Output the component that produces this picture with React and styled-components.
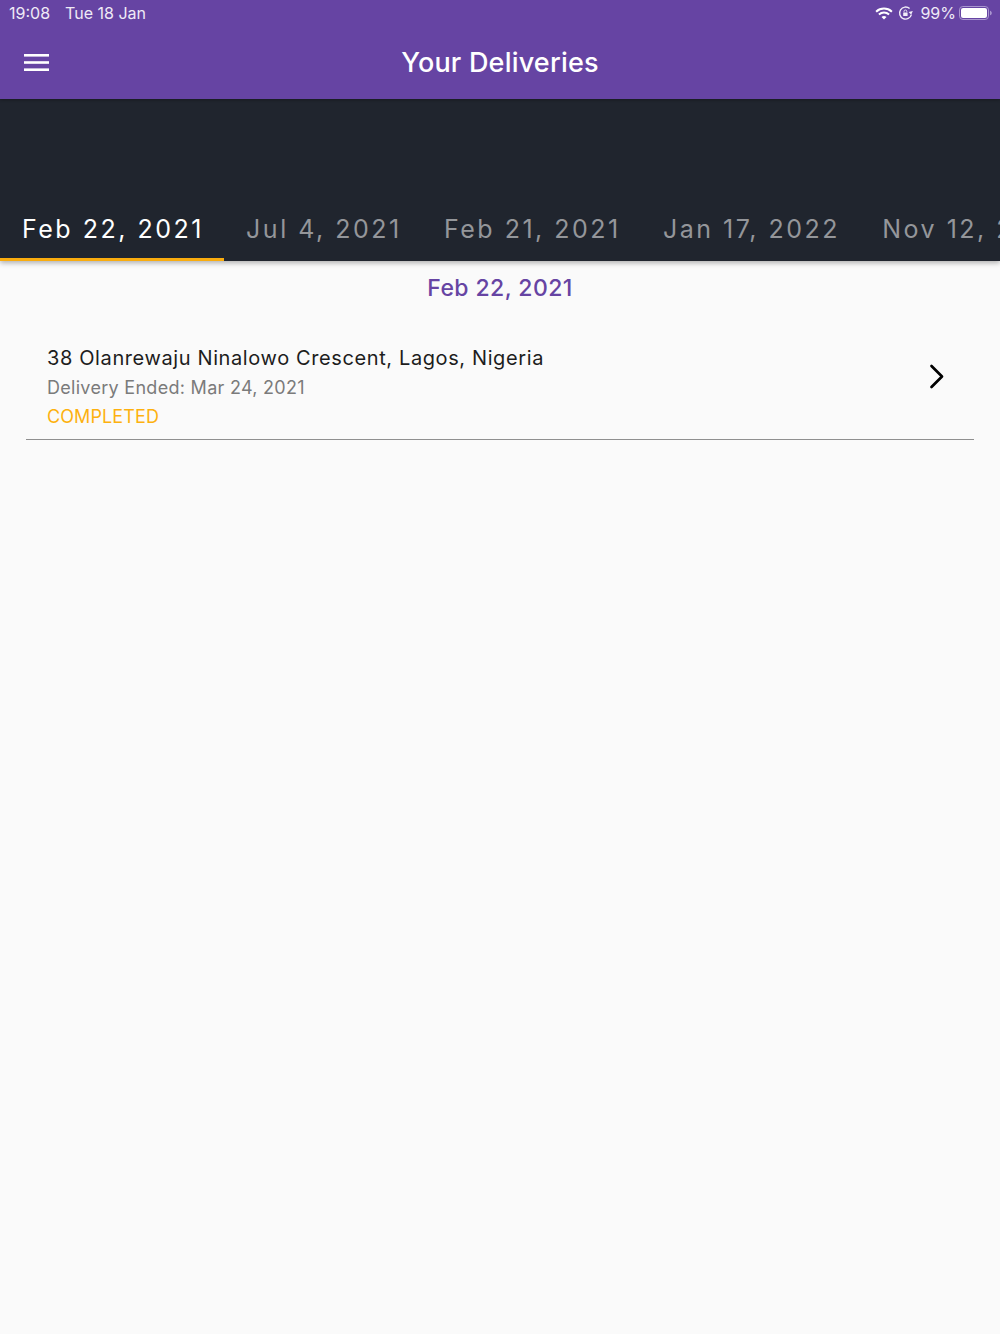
import styled, { createGlobalStyle } from "styled-components";

const GlobalStyle = createGlobalStyle`
  html, body {
    margin: 0;
    padding: 0;
    background: #fafafa;
  }
  * {
    box-sizing: border-box;
  }
`;

const Page = styled.div`
  width: 1000px;
  height: 1334px;
  overflow: hidden;
  background: #fafafa;
  font-family: Inter, "Liberation Sans", sans-serif;
  display: flex;
  flex-direction: column;
`;

const Header = styled.header`
  height: 99px;
  flex: none;
  background: #6644a3;
  display: flex;
  flex-direction: column;
  color: #fff;
  box-shadow: 0 1px 3px rgba(0, 0, 0, 0.3);
  position: relative;
  z-index: 2;
`;

const StatusBar = styled.div`
  height: 26px;
  padding: 0 7px 0 9px;
  display: flex;
  align-items: center;
  justify-content: space-between;
  font-size: 16px;
  color: #efeaf6;
`;

const StatusLeft = styled.div`
  display: flex;
  gap: 15px;
`;

const StatusRight = styled.div`
  display: flex;
  align-items: center;
`;

const Percent = styled.span`
  margin: 0 3px 0 7px;
`;

const Toolbar = styled.div`
  flex: 1;
  padding: 0 24px;
  display: grid;
  grid-template-columns: 1fr auto 1fr;
  align-items: center;
`;

const Title = styled.h1`
  margin: 0;
  font-size: 27px;
  font-weight: 500;
  letter-spacing: 0.2px;
`;

const TabPanel = styled.nav`
  height: 162px;
  flex: none;
  background: #20252e;
  display: flex;
  align-items: flex-end;
  overflow: hidden;
  box-shadow: 0 2px 5px rgba(0, 0, 0, 0.3);
  position: relative;
  z-index: 1;
`;

const Tab = styled.div`
  flex: none;
  height: 62px;
  padding: 0 20.25px 0 22px;
  display: flex;
  align-items: center;
  white-space: nowrap;
  font-size: 25px;
  letter-spacing: 2.5px;
  color: ${(p) => (p.$active ? "#ffffff" : "#94969a")};
  border-bottom: 3px solid ${(p) => (p.$active ? "#f9ac0e" : "transparent")};
`;

const DateHeading = styled.h2`
  margin: 0;
  padding-top: 13px;
  text-align: center;
  font-size: 23px;
  line-height: 28px;
  font-weight: 500;
  letter-spacing: 0.4px;
  color: #6644a3;
`;

const DeliveryRow = styled.div`
  margin: 27px 26px 0;
  padding: 15px 30px 0 21px;
  height: 111px;
  display: flex;
  align-items: flex-start;
  justify-content: space-between;
  border-bottom: 1px solid #8f8f8f;
`;

const DeliveryText = styled.div`
  display: flex;
  flex-direction: column;
`;

const Address = styled.div`
  font-size: 20px;
  line-height: 28px;
  letter-spacing: 0.61px;
  color: #1d1d1d;
`;

const Ended = styled.div`
  margin-top: 1px;
  font-size: 18px;
  line-height: 30px;
  letter-spacing: 0.29px;
  color: #7b7b7b;
`;

const Status = styled.div`
  font-size: 18px;
  line-height: 28px;
  letter-spacing: 0.1px;
  color: #fdb10f;
`;

const ChevronBox = styled.div`
  margin-top: 20px;
  display: flex;
`;

const tabs = ["Feb 22, 2021", "Jul 4, 2021", "Feb 21, 2021", "Jan 17, 2022", "Nov 12, 2021"];

function MenuIcon() {
  return (
    <svg width="25" height="18" viewBox="0 0 25 18" fill="#fff">
      <rect x="0" y="0" width="25" height="2.6" />
      <rect x="0" y="7.2" width="25" height="2.6" />
      <rect x="0" y="14.4" width="25" height="2.6" />
    </svg>
  );
}

function WifiIcon() {
  return (
    <svg width="18" height="13" viewBox="0 0 19 14" fill="none" stroke="#fff" strokeWidth="2.2">
      <path d="M1 5 C6 0.6 13 0.6 18 5" />
      <path d="M4 8 C7.2 5.4 11.8 5.4 15 8" />
      <path d="M9.5 13.5 L6.8 10.7 C8.4 9.5 10.6 9.5 12.2 10.7 Z" fill="#fff" stroke="none" />
    </svg>
  );
}

function RotationLockIcon() {
  return (
    <svg width="15" height="15" viewBox="0 0 15 15" fill="none" style={{ marginLeft: 5 }}>
      <path d="M11.6 2.6 A6 6 0 1 0 13.4 8.6" stroke="#f2eef8" strokeWidth="1.4" />
      <path d="M14.8 5 L13.2 8.8 L10.6 6 Z" fill="#f2eef8" />
      <rect x="5.2" y="6.4" width="4.4" height="3.6" rx="0.6" fill="#f2eef8" />
      <path d="M6 6.4 V5.4 A1.4 1.4 0 0 1 8.8 5.4 V6.4" stroke="#f2eef8" strokeWidth="0.9" />
    </svg>
  );
}

function BatteryIcon() {
  return (
    <svg width="34" height="14" viewBox="0 0 34 14" fill="none">
      <rect x="0.5" y="0.5" width="29" height="13" rx="3.4" stroke="#a995cf" />
      <rect x="2" y="2" width="26" height="10" rx="2.1" fill="#fff" />
      <path d="M31 4.7 C32.2 5.1 32.8 5.9 32.8 7 C32.8 8.1 32.2 8.9 31 9.3 Z" fill="#a995cf" />
    </svg>
  );
}

function ChevronIcon() {
  return (
    <svg width="15" height="26" viewBox="0 0 15 26" fill="none" stroke="#000" strokeWidth="2.7" strokeLinecap="round" strokeLinejoin="round">
      <path d="M2.5 2 L13 12.5 L2.5 23" />
    </svg>
  );
}

export default function App() {
  return (
    <>
      <GlobalStyle />
      <Page>
        <Header>
          <StatusBar>
            <StatusLeft>
              <span>19:08</span>
              <span>Tue 18 Jan</span>
            </StatusLeft>
            <StatusRight>
              <WifiIcon />
              <RotationLockIcon />
              <Percent>99%</Percent>
              <BatteryIcon />
            </StatusRight>
          </StatusBar>
          <Toolbar>
            <MenuIcon />
            <Title>Your Deliveries</Title>
          </Toolbar>
        </Header>
        <TabPanel>
          {tabs.map((t, i) => (
            <Tab key={t} $active={i === 0}>
              {t}
            </Tab>
          ))}
        </TabPanel>
        <DateHeading>Feb 22, 2021</DateHeading>
        <DeliveryRow>
          <DeliveryText>
            <Address>38 Olanrewaju Ninalowo Crescent, Lagos, Nigeria</Address>
            <Ended>Delivery Ended: Mar 24, 2021</Ended>
            <Status>COMPLETED</Status>
          </DeliveryText>
          <ChevronBox>
            <ChevronIcon />
          </ChevronBox>
        </DeliveryRow>
      </Page>
    </>
  );
}
